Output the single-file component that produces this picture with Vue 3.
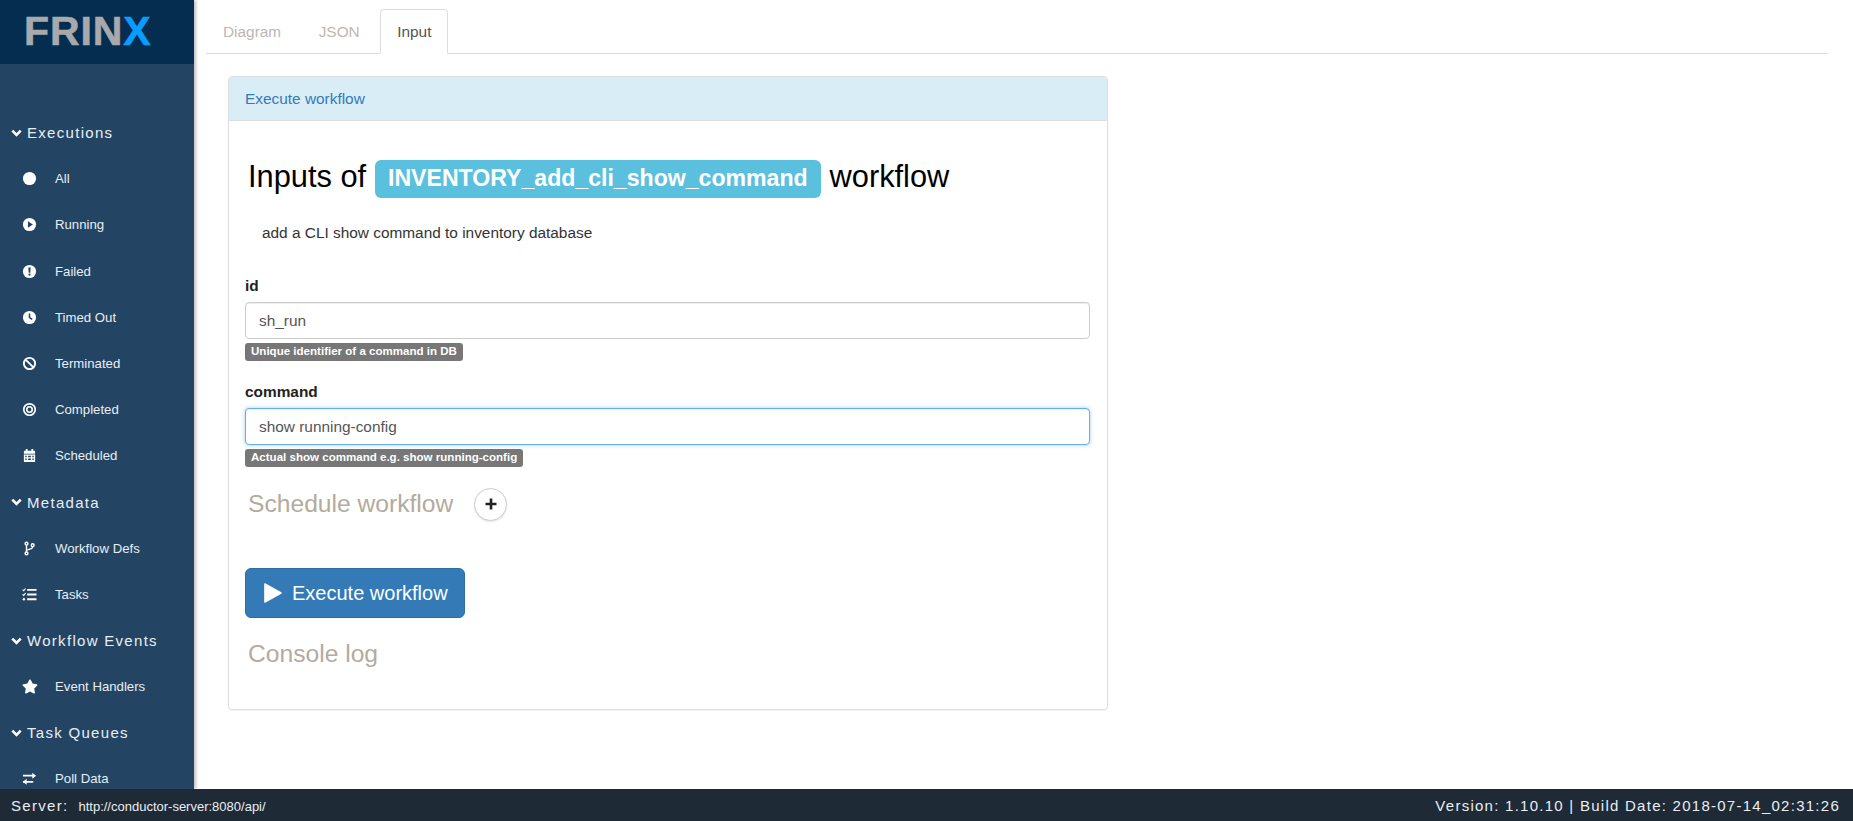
<template>
  <div class="page">
    <div class="body-row">
      <aside class="sidebar">
        <div class="logo">FRIN<span class="logo-x">X</span></div>
        <nav class="menu">
          <div v-for="group in menu" :key="group.title" class="menu-group">
            <div class="group-title">
              <svg class="chevron" viewBox="0 0 12 8">
                <path d="M1.400 1.400 6 6l4.600-4.600" fill="none" stroke="#fff" stroke-width="2.800" />
              </svg>
              {{ group.title }}
            </div>
            <div v-for="item in group.items" :key="item.label" class="menu-item">
              <span class="icon-box">
                <svg v-if="item.icon === 'all'" viewBox="0 0 16 16" class="icon">
                  <circle cx="8" cy="8" r="7" fill="#fff" />
                </svg>
                <svg v-else-if="item.icon === 'running'" viewBox="0 0 16 16" class="icon">
                  <circle cx="8" cy="8" r="7" fill="#fff" />
                  <path d="M6.300 4.600v6.800L11.600 8z" fill="#234563" />
                </svg>
                <svg v-else-if="item.icon === 'failed'" viewBox="0 0 16 16" class="icon">
                  <circle cx="8" cy="8" r="7" fill="#fff" />
                  <path d="M6.800 3.800h2.400l-.3 5.400H7.100z" fill="#234563" />
                  <circle cx="8" cy="11.200" r="1.200" fill="#234563" />
                </svg>
                <svg v-else-if="item.icon === 'timed'" viewBox="0 0 16 16" class="icon">
                  <circle cx="8" cy="8" r="7" fill="#fff" />
                  <path d="M8 3.600V8l2.900 2.100" fill="none" stroke="#234563" stroke-width="1.600" />
                </svg>
                <svg v-else-if="item.icon === 'terminated'" viewBox="0 0 16 16" class="icon">
                  <circle cx="8" cy="8" r="6" fill="none" stroke="#fff" stroke-width="2" />
                  <path d="M3.800 3.800l8.400 8.400" stroke="#fff" stroke-width="2" />
                </svg>
                <svg v-else-if="item.icon === 'completed'" viewBox="0 0 16 16" class="icon">
                  <circle cx="8" cy="8" r="6.100" fill="none" stroke="#fff" stroke-width="1.800" />
                  <circle cx="8" cy="8" r="2.900" fill="none" stroke="#fff" stroke-width="1.700" />
                </svg>
                <svg v-else-if="item.icon === 'scheduled'" viewBox="0 0 14 16" class="icon">
                  <path d="M1 4.200c0-.7.500-1.200 1.200-1.200H3V1h2v2h4V1h2v2h.8c.7 0 1.200.5 1.200 1.200V6H1z" fill="#fff" />
                  <path d="M1 7h12v7c0 .6-.5 1-1.200 1H2.200C1.500 15 1 14.600 1 14zm1.500 1.300v1.500H4V8.300zm3 0v1.500h3V8.300zm4.500 0v1.500h1.500V8.300zm-7.500 3v1.500H4v-1.500zm3 0v1.500h3v-1.500zm4.500 0v1.500h1.500v-1.500z" fill="#fff" fill-rule="evenodd" />
                </svg>
                <svg v-else-if="item.icon === 'defs'" viewBox="0 0 12 16" class="icon">
                  <circle cx="2.800" cy="2.800" r="1.500" fill="none" stroke="#fff" stroke-width="1.500" />
                  <circle cx="2.800" cy="13.200" r="1.500" fill="none" stroke="#fff" stroke-width="1.500" />
                  <circle cx="9.400" cy="4.500" r="1.500" fill="none" stroke="#fff" stroke-width="1.500" />
                  <path d="M2.800 4.500v7M2.800 10.500c0-2 6.600-1 6.600-4.500" fill="none" stroke="#fff" stroke-width="1.500" />
                </svg>
                <svg v-else-if="item.icon === 'tasks'" viewBox="0 0 16 16" class="icon">
                  <path d="M5.500 3h10M5.500 8h10M5.500 13h10" stroke="#fff" stroke-width="2" />
                  <path d="M.6 2.800 1.800 4 3.800 1.600M.6 7.800 1.800 9 3.800 6.600" fill="none" stroke="#fff" stroke-width="1.200" />
                  <circle cx="2" cy="13" r="1.300" fill="#fff" />
                </svg>
                <svg v-else-if="item.icon === 'star'" viewBox="0 0 576 512" class="icon star">
                  <path d="M259.300 17.800L194 150.200 47.900 171.500c-26.200 3.800-36.700 36.100-17.700 54.600l105.700 103-25 145.500c-4.500 26.300 23.200 46 46.400 33.700L288 439.600l130.700 68.700c23.200 12.200 50.900-7.400 46.400-33.700l-25-145.500 105.700-103c19-18.500 8.500-50.800-17.700-54.600L382 150.200 316.700 17.800c-11.700-23.600-45.600-23.900-57.400 0z" fill="#fff" />
                </svg>
                <svg v-else viewBox="0 0 16 16" class="icon">
                  <path d="M1 5h11M1 11.500h11" stroke="#fff" stroke-width="1.800" />
                  <path d="M11 1.800 15 5l-4 3.200zM5 8.300 1 11.500l4 3.200z" fill="#fff" />
                </svg>
              </span>
              <span>{{ item.label }}</span>
            </div>
          </div>
        </nav>
      </aside>

      <main class="content">
        <ul class="tabs">
          <li class="tab">Diagram</li>
          <li class="tab">JSON</li>
          <li class="tab active">Input</li>
        </ul>

        <section class="panel">
          <div class="panel-heading">Execute workflow</div>
          <div class="panel-body">
            <h1 class="title">
              Inputs of
              <span class="wf-label">INVENTORY_add_cli_show_command</span>
              workflow
            </h1>
            <p class="description">add a CLI show command to inventory database</p>

            <form class="form" @submit.prevent>
              <div v-for="field in fields" :key="field.name" class="form-group">
                <label class="field-label">{{ field.name }}</label>
                <input
                  v-model="field.value"
                  type="text"
                  class="field-input"
                  :class="{ focused: field.focused }"
                />
                <span class="help-label">{{ field.help }}</span>
              </div>
            </form>

            <div class="schedule">
              <h2 class="muted-heading">Schedule workflow</h2>
              <button type="button" class="round-btn">
                <svg viewBox="0 0 14 14" width="14" height="14">
                  <path d="M7 1.500v11M1.500 7h11" stroke="#222" stroke-width="2.600" />
                </svg>
              </button>
            </div>

            <button type="button" class="run-btn">
              <svg viewBox="1 .7 16.400 18.600" width="18" height="20">
                <path d="M1 1.500c0-.5.500-.8 1-.5l15 8.400c.5.300.5.900 0 1.200L2 19c-.5.300-1 0-1-.5z" fill="#fff" />
              </svg>
              Execute workflow
            </button>

            <h2 class="muted-heading console">Console log</h2>
          </div>
        </section>
      </main>
    </div>

    <footer class="footer">
      <div><span class="server">Server:</span><span class="server-url">http://conductor-server:8080/api/</span></div>
      <div class="version">Version: 1.10.10 | Build Date: 2018-07-14_02:31:26</div>
    </footer>
  </div>
</template>

<script setup>
import { reactive } from "vue";

const menu = [
  {
    title: "Executions",
    items: [
      { label: "All", icon: "all" },
      { label: "Running", icon: "running" },
      { label: "Failed", icon: "failed" },
      { label: "Timed Out", icon: "timed" },
      { label: "Terminated", icon: "terminated" },
      { label: "Completed", icon: "completed" },
      { label: "Scheduled", icon: "scheduled" },
    ],
  },
  {
    title: "Metadata",
    items: [
      { label: "Workflow Defs", icon: "defs" },
      { label: "Tasks", icon: "tasks" },
    ],
  },
  {
    title: "Workflow Events",
    items: [{ label: "Event Handlers", icon: "star" }],
  },
  {
    title: "Task Queues",
    items: [{ label: "Poll Data", icon: "poll" }],
  },
];

const fields = reactive([
  { name: "id", value: "sh_run", help: "Unique identifier of a command in DB", focused: false },
  {
    name: "command",
    value: "show running-config",
    help: "Actual show command e.g. show running-config",
    focused: true,
  },
]);
</script>

<style>
html,
body {
  margin: 0;
  height: 100%;
  overflow: hidden;
  background: #fff;
}
</style>

<style scoped>
.page {
  display: flex;
  flex-direction: column;
  height: 100vh;
  font-family: "Liberation Sans", Arial, sans-serif;
  font-size: 15.4px;
  color: #333;
}

.body-row {
  display: flex;
  flex: 1;
  min-height: 0;
}

.sidebar {
  width: 194px;
  flex-shrink: 0;
  background: #234563;
  box-shadow: 2px 0 3px rgba(0, 0, 0, 0.25);
  overflow: hidden;
  z-index: 1;
}

.logo {
  height: 64px;
  background: #042d4f;
  color: #a7a9ac;
  font-size: 41px;
  font-weight: 700;
  line-height: 63px;
  letter-spacing: 0.9px;
  -webkit-text-stroke: 0.6px currentColor;
  padding-left: 24px;
  box-sizing: border-box;
}

.logo-x {
  color: #0a9dff;
}

.menu {
  padding-top: 45.700px;
}

.menu-group:first-child {
  margin-bottom: 0.300px;
}

.group-title {
  display: flex;
  align-items: center;
  height: 46px;
  padding-left: 11px;
  color: #e8eef3;
  font-size: 15px;
  letter-spacing: 1.3px;
}

.chevron {
  width: 11px;
  height: 8px;
  margin-right: 5px;
}

.menu-item {
  display: flex;
  align-items: center;
  height: 46.200px;
  color: #e8eef3;
  font-size: 13.200px;
}

.icon-box {
  width: 55px;
  padding-left: 22px;
  box-sizing: border-box;
  display: flex;
  flex-shrink: 0;
}

.icon {
  width: 15px;
  height: 15px;
}

.icon.star {
  width: 16px;
}

.content {
  flex: 1;
  min-width: 0;
  padding: 0 25px 0 12px;
}

.tabs {
  display: flex;
  list-style: none;
  margin: 9px 0 0;
  padding: 0;
  border-bottom: 1px solid #ddd;
  height: 44px;
}

.tab {
  padding: 0 16px;
  line-height: 43px;
  height: 45px;
  box-sizing: border-box;
  margin-right: 3.500px;
  color: #bdb8af;
  border: 1px solid transparent;
}

.tab.active {
  color: #555;
  background: #fff;
  border: 1px solid #ddd;
  border-bottom-color: #fff;
  border-radius: 4px 4px 0 0;
}

.panel {
  width: 880px;
  margin: 22px 0 0 22px;
  border: 1px solid #ddd;
  border-radius: 4px;
  box-shadow: 0 1px 1px rgba(0, 0, 0, 0.05);
  box-sizing: border-box;
  height: 634px;
}

.panel-heading {
  height: 44px;
  padding-left: 16px;
  line-height: 43px;
  box-sizing: border-box;
  background: #d9edf7;
  border-bottom: 1px solid #ddd;
  border-radius: 3px 3px 0 0;
  color: #337ab7;
}

.panel-body {
  padding: 0 16px;
}

.title {
  margin: 39px 0 0 3px;
  font-size: 30.800px;
  font-weight: 400;
  line-height: 34px;
  color: #000;
}

.wf-label {
  display: inline-block;
  height: 38px;
  line-height: 36px;
  padding: 0 13.300px;
  background: #5bc0de;
  border-radius: 6px;
  color: #fff;
  font-size: 23.100px;
  font-weight: 700;
  vertical-align: top;
}

.description {
  margin: 24px 0 0 17px;
  line-height: 21px;
}

.form {
  margin-top: 32px;
  width: 845px;
}

.form-group {
  margin-bottom: 20px;
}

.field-label {
  display: block;
  font-weight: 700;
  line-height: 21px;
  margin-bottom: 6px;
  color: #222;
}

.field-input {
  display: block;
  width: 100%;
  height: 37px;
  padding: 6px 13px;
  box-sizing: border-box;
  border: 1px solid #ccc;
  border-radius: 4px;
  font: inherit;
  color: #555;
  outline: none;
  box-shadow: inset 0 1px 1px rgba(0, 0, 0, 0.075);
}

.field-input.focused {
  border-color: #66afe9;
  box-shadow: inset 0 1px 1px rgba(0, 0, 0, 0.075), 0 0 4px rgba(102, 175, 233, 0.6);
}

.help-label {
  display: inline-block;
  margin-top: 4px;
  height: 18px;
  line-height: 17px;
  padding: 0 6px;
  background: #777;
  border-radius: 3px;
  color: #fff;
  font-size: 11.550px;
  font-weight: 700;
  vertical-align: top;
}

.schedule {
  display: flex;
  align-items: center;
  gap: 21px;
}

.muted-heading {
  margin: 0 0 0 3px;
  font-size: 24.640px;
  font-weight: 400;
  line-height: 34px;
  color: #b3ab9d;
}

.round-btn {
  width: 33px;
  height: 33px;
  padding: 0;
  display: flex;
  align-items: center;
  justify-content: center;
  background: #fff;
  border: 1px solid #ccc;
  border-radius: 50%;
  box-shadow: 0 1px 2px rgba(0, 0, 0, 0.1);
}

.run-btn {
  display: flex;
  align-items: center;
  gap: 10px;
  margin-top: 47px;
  width: 220px;
  height: 50px;
  padding: 0 0 0 18px;
  background: #337ab7;
  border: 1px solid #2e6da4;
  border-radius: 6px;
  color: #fff;
  font: inherit;
  font-size: 20px;
}

.console {
  margin-top: 19px;
}

.footer {
  flex-shrink: 0;
  height: 32px;
  display: flex;
  align-items: center;
  justify-content: space-between;
  padding: 0 13px 0 11px;
  background: #1e2a36;
  color: #e8eef3;
  font-size: 15px;
  z-index: 2;
}

.server {
  letter-spacing: 1.300px;
}

.server-url {
  margin-left: 10px;
  font-size: 13px;
}

.version {
  letter-spacing: 1.260px;
}
</style>
